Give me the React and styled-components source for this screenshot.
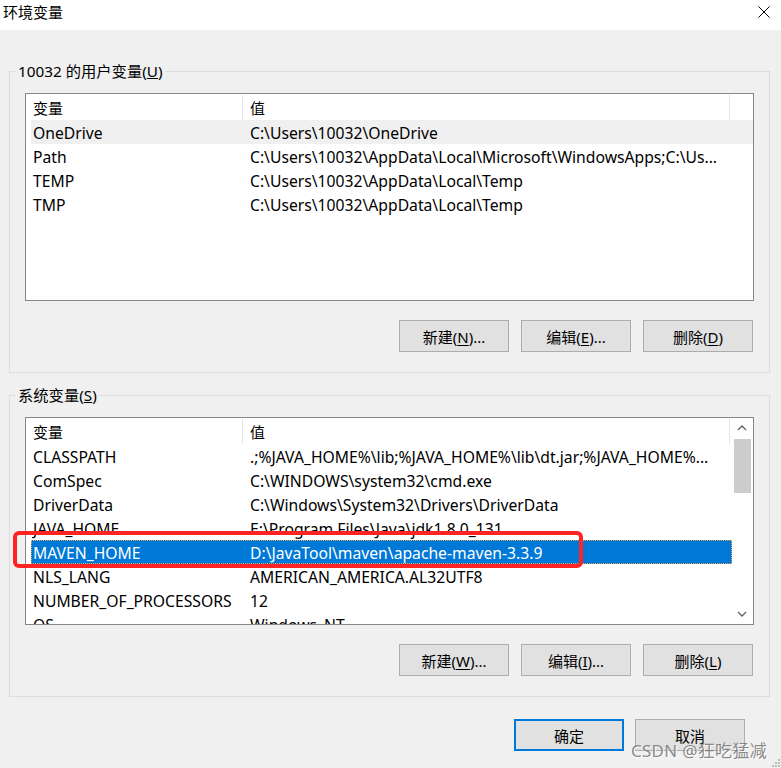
import styled, { createGlobalStyle } from "styled-components";

const GlobalStyle = createGlobalStyle`
    html, body {
        margin: 0;
        padding: 0;
        background: #f0f0f0;
    }
    * {
        box-sizing: border-box;
    }
`;

const FONT = `"Noto Sans", "Noto Sans CJK SC", sans-serif`;

const Window = styled.div`
    position: relative;
    width: 781px;
    height: 768px;
    background: #f0f0f0;
    font-family: ${FONT};
    font-size: 15px;
    color: #000;
    overflow: hidden;
    display: flex;
    flex-direction: column;
`;

const TitleBar = styled.div`
    height: 30px;
    background: #fff;
    display: flex;
    align-items: center;
    justify-content: space-between;
    padding: 0 11px 6px 3px;
`;

const Title = styled.span`
    font-size: 15px;
    line-height: 20px;
`;

const Body = styled.div`
    flex: 1;
    padding: 31px 11px 0 9px;
    display: flex;
    flex-direction: column;
`;

const Group = styled.fieldset`
    margin: 0 0 ${(p) => p.$gap || 0}px;
    padding: 12px 15px 20px;
    border: 1px solid #dcdcdc;
    min-inline-size: 0;
`;

const Legend = styled.legend`
    margin-left: -9px;
    padding: 0 2px;
    font-size: 15.3px;
    line-height: 20px;
`;

const ListBox = styled.div`
    height: 208px;
    border: 1px solid #828790;
    background: #fff;
    display: flex;
    overflow: hidden;
    font-size: 15.7px;
`;

const ListArea = styled.div`
    flex: 1;
    padding-left: 5px;
    overflow: hidden;
`;

const HeaderRow = styled.div`
    display: grid;
    grid-template-columns: 212px 487px;
    height: 26px;
`;

const HeaderCell = styled.div`
    border-right: 1px solid #e5e5e5;
    padding: 2px 0 0 ${(p) => (p.$value ? 7 : 2)}px;
    margin: 1px 0 1px;
    line-height: 23px;
    font-size: 15px;
`;

const Row = styled.div`
    display: grid;
    grid-template-columns: 212px 487px;
    height: 24px;
    padding-top: 1px;
    line-height: 22px;
    background: ${(p) => (p.$selected ? "#0078d7" : p.$hover ? "#f0f0f0" : "transparent")};
    color: ${(p) => (p.$selected ? "#fff" : "#000")};
    border: 1px dotted ${(p) => (p.$selected ? "#e8a860" : "transparent")};
`;

const Cell = styled.div`
    padding-left: ${(p) => (p.$value ? 6 : 1)}px;
    white-space: nowrap;
    overflow: hidden;
`;

const ScrollBar = styled.div`
    width: 20px;
    margin-right: 1px;
    background: #fff;
    display: flex;
    flex-direction: column;
`;

const ScrollArrow = styled.div`
    height: 20px;
    display: flex;
    align-items: center;
    justify-content: center;
    margin-top: ${(p) => (p.$down ? "auto" : 0)};
`;

const ScrollThumb = styled.div`
    height: 54px;
    margin: 1px 1px 0 2px;
    background: #cdcdcd;
`;

const ButtonRow = styled.div`
    display: flex;
    justify-content: flex-end;
    gap: ${(p) => p.$gap || 12}px;
    margin-top: ${(p) => p.$top || 19}px;
    padding-right: ${(p) => p.$right || 0}px;
`;

const Button = styled.button`
    width: 110px;
    height: 32px;
    background: #e1e1e1;
    border: ${(p) => (p.$primary ? "2px solid #0078d7" : "1px solid #adadad")};
    font-family: ${FONT};
    font-size: 15px;
    color: #000;
    padding: 0;
    cursor: default;

    u {
        text-underline-offset: 2px;
    }
`;

const Highlight = styled.div`
    position: absolute;
    left: 13px;
    top: 531px;
    width: 570px;
    height: 37px;
    border: 4px solid #ff2424;
    border-radius: 6px;
    pointer-events: none;
`;

const Watermark = styled.div`
    position: absolute;
    right: 14px;
    bottom: 6px;
    font-family: ${FONT};
    font-size: 17px;
    color: rgba(110, 110, 110, 0.8);
    text-shadow: 1px 1px 0 rgba(255, 255, 255, 0.9);
    letter-spacing: 0.3px;
`;

const Grip = styled.svg`
    position: absolute;
    right: 0;
    bottom: 0;
`;

const CloseIcon = () => (
    <svg width="12" height="12" viewBox="0 0 12 12">
        <path d="M0.5 0.5 L11.5 11.5 M11.5 0.5 L0.5 11.5" stroke="#000" strokeWidth="1" />
    </svg>
);

const Chevron = ({ down }) => (
    <svg width="10" height="6" viewBox="0 0 10 6">
        <polyline
            points={down ? "1,1 5,5 9,1" : "1,5 5,1 9,5"}
            fill="none"
            stroke="#606060"
            strokeWidth="1.3"
        />
    </svg>
);

const userVars = [
    ["OneDrive", "C:\\Users\\10032\\OneDrive"],
    ["Path", "C:\\Users\\10032\\AppData\\Local\\Microsoft\\WindowsApps;C:\\Us..."],
    ["TEMP", "C:\\Users\\10032\\AppData\\Local\\Temp"],
    ["TMP", "C:\\Users\\10032\\AppData\\Local\\Temp"],
];

const systemVars = [
    ["CLASSPATH", ".;%JAVA_HOME%\\lib;%JAVA_HOME%\\lib\\dt.jar;%JAVA_HOME%..."],
    ["ComSpec", "C:\\WINDOWS\\system32\\cmd.exe"],
    ["DriverData", "C:\\Windows\\System32\\Drivers\\DriverData"],
    ["JAVA_HOME", "E:\\Program Files\\Java\\jdk1.8.0_131"],
    ["MAVEN_HOME", "D:\\JavaTool\\maven\\apache-maven-3.3.9"],
    ["NLS_LANG", "AMERICAN_AMERICA.AL32UTF8"],
    ["NUMBER_OF_PROCESSORS", "12"],
    ["OS", "Windows_NT"],
];

const VarList = ({ rows, hover, selected, scroll }) => (
    <ListBox>
        <ListArea>
            <HeaderRow>
                <HeaderCell>变量</HeaderCell>
                <HeaderCell $value>值</HeaderCell>
            </HeaderRow>
            {rows.map(([name, value]) => (
                <Row key={name} $hover={name === hover} $selected={name === selected}>
                    <Cell>{name}</Cell>
                    <Cell $value>{value}</Cell>
                </Row>
            ))}
        </ListArea>
        {scroll && (
            <ScrollBar>
                <ScrollArrow>
                    <Chevron />
                </ScrollArrow>
                <ScrollThumb />
                <ScrollArrow $down>
                    <Chevron down />
                </ScrollArrow>
            </ScrollBar>
        )}
    </ListBox>
);

const App = () => {
    return (
        <Window>
            <GlobalStyle />
            <TitleBar>
                <Title>环境变量</Title>
                <CloseIcon />
            </TitleBar>
            <Body>
                <Group $gap={12}>
                    <Legend>
                        10032 的用户变量(<u>U</u>)
                    </Legend>
                    <VarList rows={userVars} hover="OneDrive" />
                    <ButtonRow $right={1}>
                        <Button>
                            新建(<u>N</u>)...
                        </Button>
                        <Button>
                            编辑(<u>E</u>)...
                        </Button>
                        <Button>
                            删除(<u>D</u>)
                        </Button>
                    </ButtonRow>
                </Group>
                <Group>
                    <Legend>
                        系统变量(<u>S</u>)
                    </Legend>
                    <VarList rows={systemVars} selected="MAVEN_HOME" scroll />
                    <ButtonRow $right={1}>
                        <Button>
                            新建(<u>W</u>)...
                        </Button>
                        <Button>
                            编辑(<u>I</u>)...
                        </Button>
                        <Button>
                            删除(<u>L</u>)
                        </Button>
                    </ButtonRow>
                </Group>
                <ButtonRow $top={22} $right={25} $gap={11}>
                    <Button $primary>确定</Button>
                    <Button>取消</Button>
                </ButtonRow>
            </Body>
            <Highlight />
            <Watermark>CSDN @狂吃猛减</Watermark>
            <Grip width="11" height="11" viewBox="0 0 11 11">
                {[
                    [8, 2],
                    [5, 5],
                    [8, 5],
                    [2, 8],
                    [5, 8],
                    [8, 8],
                ].map(([x, y]) => (
                    <rect key={`${x}-${y}`} x={x} y={y} width="2" height="2" fill="#bcbcbc" />
                ))}
            </Grip>
        </Window>
    );
};

export default App;
